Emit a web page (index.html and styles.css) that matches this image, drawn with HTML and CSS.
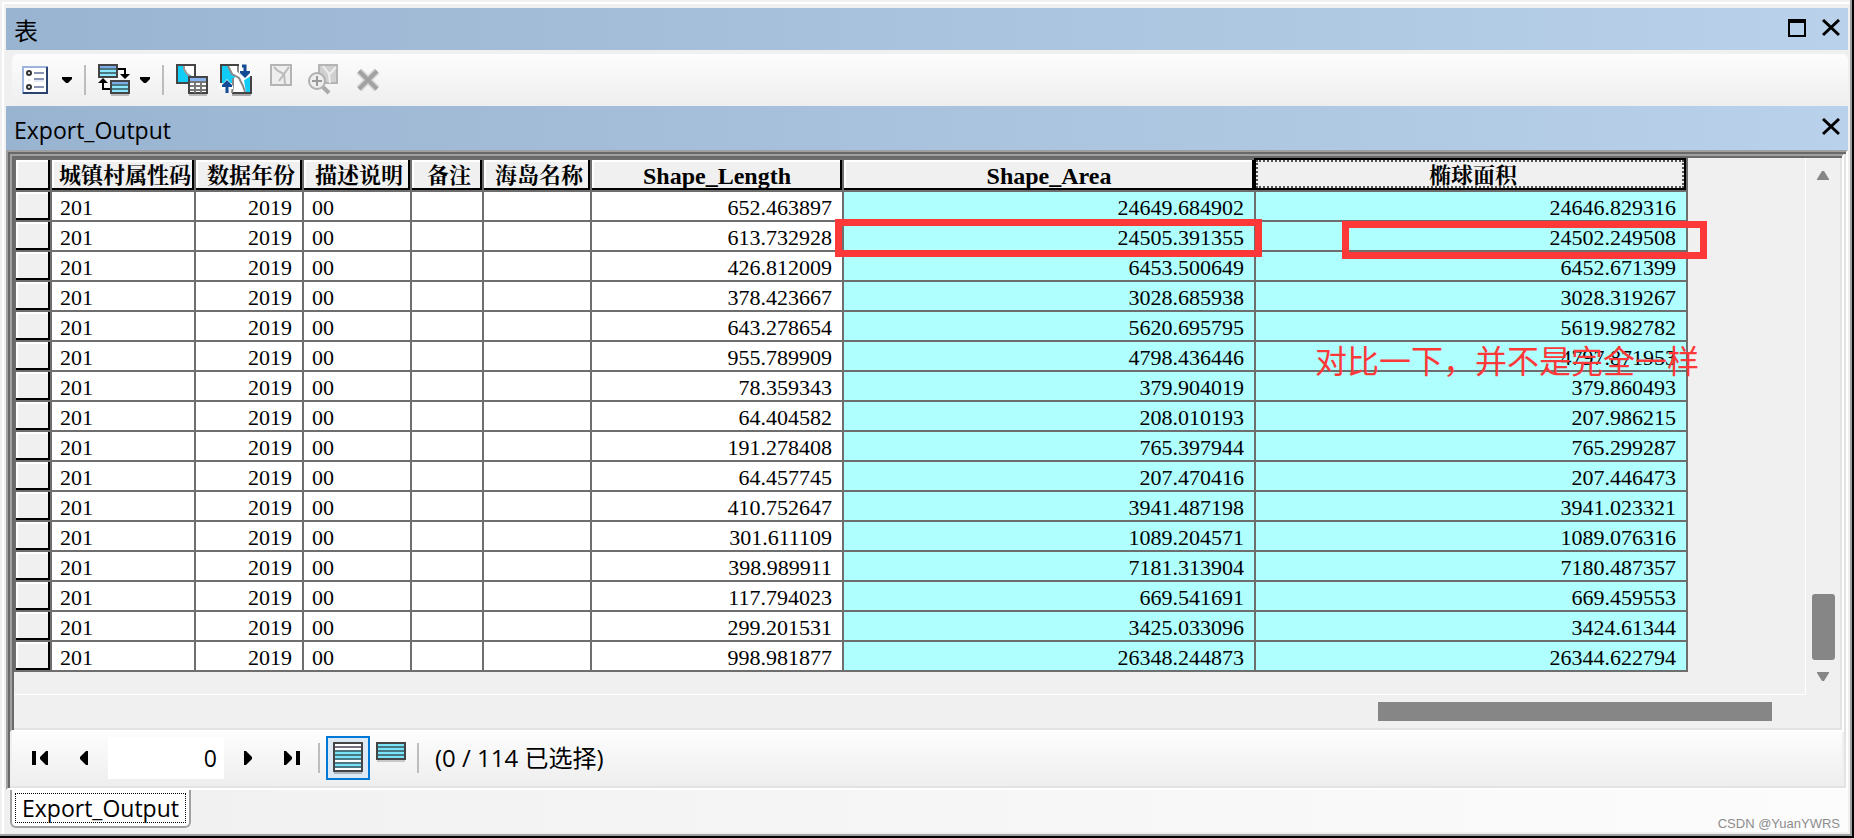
FILE: index.html
```html
<!DOCTYPE html>
<html lang="zh-CN">
<head>
<meta charset="utf-8">
<title>表</title>
<link rel="stylesheet" href="styles.css">
</head>
<body>
<main class="window">
  <header class="bar">
    <h1 class="bar-title">表</h1>
    <div class="bar-actions">
      <button class="bar-button" aria-label="最大化"><svg width="18" height="18" viewBox="0 0 18 18" shape-rendering="crispEdges"><path d="M0 0h18v18H0zM2 4v12h14V4z" fill-rule="evenodd"/></svg></button>
      <button class="bar-button" aria-label="关闭"><svg width="18" height="18" viewBox="0 0 18 18"><path d="M1 1l16 15M17 1L1 16" stroke="#000" stroke-width="3"/></svg></button>
    </div>
  </header>

  <div class="toolbar" role="toolbar">
    <button class="tool tool-options" aria-label="表选项">
      <svg width="26" height="30" viewBox="0 0 26 30"><path d="M1 2h24v26H1z" fill="#fff" stroke="#9db4dc" stroke-width="2"/><path d="M25 2v26H1" fill="none" stroke="#29436e" stroke-width="2"/><circle cx="7" cy="8" r="2" fill="#fff" stroke="#333" stroke-width="2"/><circle cx="7" cy="22" r="2" fill="#fff" stroke="#333" stroke-width="2"/><path d="M12 8h10M12 14h10M12 22h10" stroke="#8993b5" stroke-width="2"/><path d="M12 16h10M6 15h2" stroke="#cfd5e6" stroke-width="1"/></svg>
      <svg class="caret" width="10" height="6" viewBox="0 0 10 6"><path d="M0 0h10v2L6 6H4L0 2z"/></svg>
    </button>
    <span class="separator"></span>
    <button class="tool" aria-label="关联表">
      <svg width="32" height="32" viewBox="0 0 32 32"><path d="M1 1h18v12H1z" fill="#8de8fa" stroke="#444" stroke-width="2"/><path d="M2 2h16v2H2z" fill="#7eaae8"/><path d="M2 5h16M2 9h16" stroke="#477883" stroke-width="2"/><path d="M13 17h18v12H13z" fill="#8de8fa" stroke="#444" stroke-width="2"/><path d="M14 18h16v2H14z" fill="#7eaae8"/><path d="M14 21h16M14 25h16" stroke="#477883" stroke-width="2"/><path d="M20 5h7v6M12 25H5v-6" fill="none" stroke="#000" stroke-width="2"/><path d="M22 10h10l-5 5zM0 19h10l-5-5z"/><path d="M13 31h18" stroke="#bbb" stroke-width="2"/></svg>
      <svg class="caret" width="10" height="6" viewBox="0 0 10 6"><path d="M0 0h10v2L6 6H4L0 2z"/></svg>
    </button>
    <span class="separator"></span>
    <button class="tool" aria-label="按属性选择">
      <svg width="32" height="32" viewBox="0 0 32 32"><path d="M1 1h18v18H1z" fill="#fff"/><path d="M2 2h6l1 6 7 4v7H2z" fill="#11cdf5"/><path d="M8 1v4l3 5 6 4" fill="none" stroke="#999" stroke-width="2"/><path d="M1 1h18v18H1z" fill="none" stroke="#444" stroke-width="2"/><path d="M13 13h18v16H13z" fill="#fff" stroke="#444" stroke-width="2"/><path d="M14 14h16v3H14z" fill="#84b4f0"/><path d="M14 18h16M14 22h16M14 26h16M19 17v12M25 17v12" stroke="#777" stroke-width="2"/><path d="M13 31h18" stroke="#bbb" stroke-width="2"/></svg>
    </button>
    <button class="tool" aria-label="切换选择">
      <svg width="32" height="32" viewBox="0 0 32 32"><path d="M1 1h18l12 12v16H12V19H1z" fill="#fff"/><path d="M1 1h7l3 8 4 3-2 7H1zM24 16l7-4v17h-5z" fill="#11cdf5"/><path d="M19 1H1v18M12 29h19V12" fill="none" stroke="#444" stroke-width="2"/><path d="M8 2l4 8 7 4 4 8 2 6M18 2v5l4 4M13 14v8l-1 7" fill="none" stroke="#888" stroke-width="2"/><path d="M12 31h19" stroke="#aaa" stroke-width="2"/><path d="M19 6h12v3l-6 7-6-7zM1 25h12v-3l-6-7-6 7z" fill="#fff"/><path d="M22 2h3v6M7 29v-7" fill="none" stroke="#124b93" stroke-width="3"/><path d="M20 7h10v2l-5 5-5-5zM2 23h10v-2l-5-5-5 5z" fill="#124b93"/></svg>
    </button>
    <button class="tool" disabled aria-label="清除所选内容">
      <svg width="32" height="32" viewBox="0 0 32 32"><path d="M7 1h20v20H7z" fill="#eee" stroke="#b4b4b4" stroke-width="2"/><path d="M10 3l4 4 6 3 1 10M25 3l-5 7-5 7" fill="none" stroke="#bbb" stroke-width="2"/></svg>
    </button>
    <button class="tool" disabled aria-label="缩放至所选要素">
      <svg width="32" height="32" viewBox="0 0 32 32"><path d="M11 1h18v18H11z" fill="#d0d0d0" stroke="#b4b4b4" stroke-width="2"/><path d="M15 2l6 8 1 9M28 3l-6 7" fill="none" stroke="#eee" stroke-width="2"/><path d="M15 23l6 6" stroke="#aaa" stroke-width="4"/><circle cx="9" cy="17" r="8" fill="#eee" stroke="#b0b0b0" stroke-width="2"/><path d="M4 17h10M9 12v10" stroke="#999" stroke-width="2"/></svg>
    </button>
    <button class="tool" disabled aria-label="删除所选内容">
      <svg width="32" height="32" viewBox="0 0 32 32"><path d="M7 7l18 18M25 7L7 25" stroke="#d4d4d4" stroke-width="7"/><path d="M7 7l18 18M25 7L7 25" stroke="#a2a2a2" stroke-width="4"/></svg>
    </button>
  </div>

  <header class="bar bar-sub">
    <h2 class="bar-title">Export_Output</h2>
    <div class="bar-actions">
      <button class="bar-button" aria-label="关闭表"><svg width="18" height="18" viewBox="0 0 18 18"><path d="M1 1l16 15M17 1L1 16" stroke="#000" stroke-width="3"/></svg></button>
    </div>
  </header>

  <section class="frame">
    <div class="grid">
      <div class="sheet">
        <table class="records">
          <colgroup><col class="c-mark"><col class="c-code"><col class="c-mid"><col class="c-mid"><col class="c-note"><col class="c-mid"><col class="c-length"><col class="c-area"><col class="c-ellipsoid"></colgroup>
          <thead><tr><td class="mark"></td><th scope="col">城镇村属性码</th><th scope="col">数据年份</th><th scope="col">描述说明</th><th scope="col">备注</th><th scope="col">海岛名称</th><th scope="col" class="latin">Shape_Length</th><th scope="col" class="latin">Shape_Area</th><th scope="col" class="current">椭球面积</th></tr></thead>
          <tbody>
            <tr><td class="mark"></td><td>201</td><td class="num">2019</td><td>00</td><td></td><td></td><td class="num">652.463897</td><td class="num hot">24649.684902</td><td class="num hot">24646.829316</td></tr>
            <tr><td class="mark"></td><td>201</td><td class="num">2019</td><td>00</td><td></td><td></td><td class="num">613.732928</td><td class="num hot">24505.391355</td><td class="num hot">24502.249508</td></tr>
            <tr><td class="mark"></td><td>201</td><td class="num">2019</td><td>00</td><td></td><td></td><td class="num">426.812009</td><td class="num hot">6453.500649</td><td class="num hot">6452.671399</td></tr>
            <tr><td class="mark"></td><td>201</td><td class="num">2019</td><td>00</td><td></td><td></td><td class="num">378.423667</td><td class="num hot">3028.685938</td><td class="num hot">3028.319267</td></tr>
            <tr><td class="mark"></td><td>201</td><td class="num">2019</td><td>00</td><td></td><td></td><td class="num">643.278654</td><td class="num hot">5620.695795</td><td class="num hot">5619.982782</td></tr>
            <tr><td class="mark"></td><td>201</td><td class="num">2019</td><td>00</td><td></td><td></td><td class="num">955.789909</td><td class="num hot">4798.436446</td><td class="num hot">4797.871953</td></tr>
            <tr><td class="mark"></td><td>201</td><td class="num">2019</td><td>00</td><td></td><td></td><td class="num">78.359343</td><td class="num hot">379.904019</td><td class="num hot">379.860493</td></tr>
            <tr><td class="mark"></td><td>201</td><td class="num">2019</td><td>00</td><td></td><td></td><td class="num">64.404582</td><td class="num hot">208.010193</td><td class="num hot">207.986215</td></tr>
            <tr><td class="mark"></td><td>201</td><td class="num">2019</td><td>00</td><td></td><td></td><td class="num">191.278408</td><td class="num hot">765.397944</td><td class="num hot">765.299287</td></tr>
            <tr><td class="mark"></td><td>201</td><td class="num">2019</td><td>00</td><td></td><td></td><td class="num">64.457745</td><td class="num hot">207.470416</td><td class="num hot">207.446473</td></tr>
            <tr><td class="mark"></td><td>201</td><td class="num">2019</td><td>00</td><td></td><td></td><td class="num">410.752647</td><td class="num hot">3941.487198</td><td class="num hot">3941.023321</td></tr>
            <tr><td class="mark"></td><td>201</td><td class="num">2019</td><td>00</td><td></td><td></td><td class="num">301.611109</td><td class="num hot">1089.204571</td><td class="num hot">1089.076316</td></tr>
            <tr><td class="mark"></td><td>201</td><td class="num">2019</td><td>00</td><td></td><td></td><td class="num">398.989911</td><td class="num hot">7181.313904</td><td class="num hot">7180.487357</td></tr>
            <tr><td class="mark"></td><td>201</td><td class="num">2019</td><td>00</td><td></td><td></td><td class="num">117.794023</td><td class="num hot">669.541691</td><td class="num hot">669.459553</td></tr>
            <tr><td class="mark"></td><td>201</td><td class="num">2019</td><td>00</td><td></td><td></td><td class="num">299.201531</td><td class="num hot">3425.033096</td><td class="num hot">3424.61344</td></tr>
            <tr><td class="mark"></td><td>201</td><td class="num">2019</td><td>00</td><td></td><td></td><td class="num">998.981877</td><td class="num hot">26348.244873</td><td class="num hot">26344.622794</td></tr>
          </tbody>
        </table>
        <div class="callout callout-area"></div>
        <div class="callout callout-ellipsoid"></div>
        <p class="remark">对比一下，并不是完全一样</p>
      </div>
      <div class="vscroll">
        <svg width="12" height="10" viewBox="0 0 12 10"><path d="M5 1h2l5 8v1H0V9z" fill="#868686"/></svg>
        <div class="vthumb"></div>
        <svg width="12" height="10" viewBox="0 0 12 10"><path d="M5 9h2l5-8V0H0v1z" fill="#868686"/></svg>
      </div>
      <div class="hscroll"><div class="hthumb"></div></div>
    </div>

    <nav class="navigator">
      <button class="step" aria-label="第一条"><svg width="16" height="14" viewBox="0 0 16 14"><path d="M0 0h4v14H0zM16 0v14h-2L8 8V6l6-6z"/></svg></button>
      <button class="step" aria-label="上一条"><svg width="8" height="14" viewBox="0 0 8 14"><path d="M8 0v14H6L0 8V6l6-6z"/></svg></button>
      <input class="position" type="text" value="0" aria-label="当前记录">
      <button class="step" aria-label="下一条"><svg width="8" height="14" viewBox="0 0 8 14"><path d="M0 0v14h2l6-6V6L2 0z"/></svg></button>
      <button class="step" aria-label="最后一条"><svg width="16" height="14" viewBox="0 0 16 14"><path d="M12 0h4v14h-4zM0 0v14h2l6-6V6L2 0z"/></svg></button>
      <span class="separator"></span>
      <button class="view view-on" aria-label="显示所有记录"><svg width="30" height="32" viewBox="0 0 30 32" shape-rendering="crispEdges"><path d="M1 1h28v28H1z" fill="#fff"/><path d="M2 9h26v5H2zM2 14h26v4H2zM2 22h26v4H2z" fill="#7be3f7"/><path d="M2 5h26" stroke="#776f83" stroke-width="2"/><path d="M2 9h26M2 13h26M2 17h26M2 21h26M2 25h26" stroke="#477883" stroke-width="2"/><path d="M1 1h28v28H1z" fill="none" stroke="#444" stroke-width="2"/><path d="M1 31h28" stroke="#aab4c0" stroke-width="2"/></svg></button>
      <button class="view" aria-label="显示所选记录"><svg width="30" height="32" viewBox="0 0 30 32" shape-rendering="crispEdges"><path d="M1 1h28v16H1z" fill="#7be3f7"/><path d="M2 5h26M2 9h26M2 13h26" stroke="#477883" stroke-width="2"/><path d="M1 1h28v16H1z" fill="none" stroke="#444" stroke-width="2"/><path d="M1 19h28" stroke="#c8c8c8" stroke-width="2"/></svg></button>
      <span class="separator"></span>
      <span class="count">(0 / 114 已选择)</span>
    </nav>
  </section>

  <footer class="tabs">
    <button class="tab"><span class="tab-label">Export_Output</span></button>
    <span class="watermark">CSDN @YuanYWRS</span>
  </footer>
</main>
</body>
</html>
```
FILE: styles.css
```css
* { box-sizing: border-box; }

body {
  margin: 0;
  background: #f0f0f0;
  color: #000;
  font: 23px/30px "Open Sans", "Noto Sans CJK SC", sans-serif;
}

button {
  padding: 0;
  border: 0;
  background: none;
  color: inherit;
  font: inherit;
}

svg { display: block; }

h1, h2, p { margin: 0; font-weight: 400; }

.window {
  display: flex;
  flex-direction: column;
  min-height: 100vh;
  padding: 6px 2px 0 4px;
  border-right: 2px solid #000;
  border-bottom: 2px solid #000;
  box-shadow: inset -2px -2px #a0a0a0, inset 2px 2px #f0f0f0, inset 4px 4px #fff;
}

.bar {
  display: flex;
  align-items: center;
  justify-content: space-between;
  height: 42px;
  margin: 2px 2px 0;
  padding: 0 8px;
  background: linear-gradient(90deg, #99b4d1, #b9d1ea);
}

.bar-sub { height: 44px; margin-top: 0; }

.bar-title { padding-top: 4px; font-size: 23px; line-height: 30px; }

.bar h1 { font-size: 24px; }

.bar-actions { display: flex; gap: 16px; padding-bottom: 3px; }

.toolbar {
  display: flex;
  align-items: center;
  gap: 12px;
  height: 52px;
  margin: 4px 2px 0 8px;
  padding: 0 10px;
  border-radius: 6px;
  background: linear-gradient(#fdfdfd, #eee);
}

.tool { display: flex; align-items: center; gap: 10px; }

.tool-options { gap: 14px; }

.separator { width: 2px; height: 30px; background: #bdbdbd; }

.frame {
  margin: 0 2px;
  padding: 2px;
  border: 2px solid;
  border-color: #a0a0a0 #fff #fff #a0a0a0;
  box-shadow: inset 2px 2px #696969, inset -2px -2px #e3e3e3;
}

.grid {
  display: grid;
  grid-template-columns: 1fr 34px;
  grid-template-rows: auto 33px;
  border: 2px solid;
  border-color: #a0a0a0 #fff #fff #a0a0a0;
  padding: 2px;
  background: #f0f0f0;
  box-shadow: inset 2px 2px #696969, inset -2px -2px #e3e3e3;
}

.sheet {
  position: relative;
  padding-bottom: 22px;
  border-right: 1px solid #fff;
  border-bottom: 1px solid #fff;
}

.records {
  width: 1674px;
  table-layout: fixed;
  border-collapse: separate;
  border-spacing: 0;
  border-top: 2px solid #6e6e6e;
  border-left: 2px solid #6e6e6e;
  font: 22px/24px "Liberation Serif", "Noto Serif CJK SC", "Noto Sans CJK SC", serif;
}

.c-mark { width: 36px; }
.c-code { width: 144px; }
.c-mid { width: 108px; }
.c-note { width: 72px; }
.c-length { width: 252px; }
.c-area { width: 412px; }
.c-ellipsoid { width: 432px; }

.records td, .records th {
  height: 30px;
  padding: 4px 8px 0;
  border-right: 2px solid #6e6e6e;
  border-bottom: 2px solid #6e6e6e;
  background: #fff;
  white-space: nowrap;
}

.records .num { padding-right: 10px; text-align: right; }

.records .hot { background: #afffff; }

.records th, .records .mark {
  background: #f0f0f0;
  box-shadow: inset -2px -2px #000, inset 2px 2px #fff;
}

.records th, .records thead .mark { height: 32px; }

.records th { padding: 1px 0 0 4px; font-weight: 700; text-align: center; }

.records .latin { padding-left: 0; font-size: 24px; }

.records .current {
  position: relative;
  box-shadow: -2px -2px #000, inset -2px -2px #000;
}

.current::after {
  content: "";
  position: absolute;
  inset: 0 2px 2px 0;
  border: 2px dotted #555;
}

.callout {
  position: absolute;
  height: 38px;
  border: 7px solid #fd3838;
}

.callout-area { top: 61px; left: 821px; width: 427px; }
.callout-ellipsoid { top: 63px; left: 1328px; width: 365px; }

.remark {
  position: absolute;
  top: 178px;
  left: 1301px;
  color: #fd3838;
  font: 32px/46px "Noto Sans CJK SC", sans-serif;
  white-space: nowrap;
}

.vscroll {
  display: flex;
  flex-direction: column;
  align-items: center;
  padding: 12px 0 13px;
}

.vthumb {
  width: 23px;
  height: 66px;
  margin: auto 0 12px;
  border-radius: 3px;
  background: #868686;
}

.hscroll {
  display: flex;
  align-items: center;
  justify-content: flex-end;
  padding-right: 34px;
}

.hthumb { width: 394px; height: 19px; background: #868686; }

.navigator {
  display: flex;
  align-items: center;
  height: 54px;
  margin: 0 2px;
  padding: 0 20px 2px;
  background: linear-gradient(#fdfdfd, #eee);
}

.step { margin-right: 32px; }

.step + .position { margin-left: -12px; }

.position {
  width: 116px;
  height: 42px;
  margin-right: 20px;
  padding: 0 7px;
  border: 0;
  background: #fff;
  font: inherit;
  text-align: right;
}

.navigator .separator { margin-left: -14px; }

.view {
  display: flex;
  justify-content: center;
  width: 44px;
  height: 44px;
  margin-left: 6px;
  padding-top: 6px;
}

.view-on {
  padding-top: 4px;
  border: 2px solid #0078d7;
  background: #dce8f4;
}

.view + .view { margin-left: -1px; }

.navigator .view + .separator { margin-left: 4px; }

.count { margin-left: 16px; font-size: 24px; }

.tabs {
  display: flex;
  flex: 1;
  align-items: flex-start;
  justify-content: space-between;
  margin: 0 2px 4px;
  padding: 0 8px 0 4px;
  background: linear-gradient(90deg, #f0f0f0, #fcfcfc);
}

.tab {
  padding: 4px;
  border: 2px solid #a0a0a0;
  border-top: 0;
  border-radius: 0 0 6px 6px;
  background: #fff;
}

.tab-label {
  display: block;
  padding: 0 6px;
  outline: 1px dotted #000;
  line-height: 28px;
}

.watermark {
  align-self: flex-end;
  color: #8c8c8c;
  font: 13px/16px "Liberation Sans", sans-serif;
}
```
